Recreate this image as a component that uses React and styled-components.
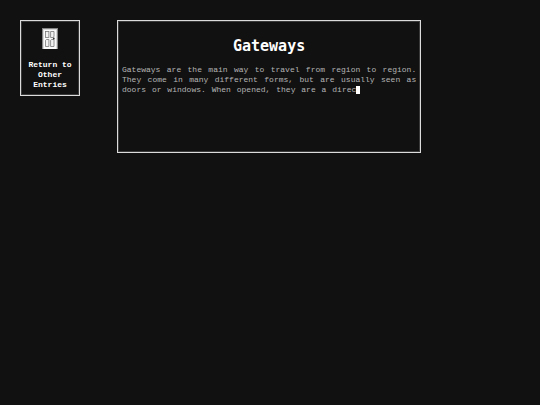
import React from "react";
import styled, { createGlobalStyle } from "styled-components";

const GlobalStyle = createGlobalStyle`
  * { box-sizing: border-box; }
  body {
    margin: 0;
    background: #111;
    color: #fff;
    font-family: "Liberation Mono", "Courier New", monospace;
    font-size: 8px;
    line-height: 10px;
  }
`;

const Page = styled.div`
  display: grid;
  grid-template-columns: 60px minmax(0, 1fr);
  align-items: start;
  column-gap: 37px;
  padding: 20px 22% 20px 20px;
`;

const Frame = styled.div`
  border: 1px solid #dcdcdc;
  box-shadow: inset 0 0 0 1px #3a3a3a;
`;

const ReturnLink = styled(Frame).attrs({ as: "a" })`
  display: flex;
  flex-direction: column;
  align-items: center;
  gap: 11px;
  padding: 7px 4px 5px;
  color: #fff;
  font-weight: bold;
  text-align: center;
  text-decoration: none;
`;

const DoorIcon = styled.svg`
  display: block;
  width: 16px;
  height: 21px;
`;

const Entry = styled(Frame).attrs({ as: "main" })`
  min-height: 133px;
  padding: 16px 4px;
`;

const Title = styled.h1`
  margin: 0 0 10px;
  font: bold 15px/18px "DejaVu Sans Mono", monospace;
  text-align: center;
`;

const Text = styled.p`
  margin: 0;
  color: #b4b4b4;
`;

const Line = styled.span`
  display: block;
  width: ${({ $width }) => $width};
  white-space: nowrap;
  text-align: justify;
  text-align-last: justify;
`;

const Cursor = styled.span`
  display: inline-block;
  width: 4px;
  height: 8px;
  background: #fff;
  vertical-align: -2px;
`;

function Door() {
  return (
    <DoorIcon viewBox="0 0 16 21" aria-hidden="true">
      <rect width="16" height="21" fill="#858585" />
      <rect x="1" y="1" width="14" height="20" fill="#d8d8d8" />
      <rect x="2" y="2" width="12" height="19" fill="#fafafa" />
      <g fill="#f2f2f2" stroke="#777" strokeWidth="0.8">
        <rect x="3.5" y="3.5" width="3.4" height="6" />
        <path d="M8.6 3.5h3.4v5.2l-1 .8H8.6z" />
        <path d="M3.5 12.3l1-.8h2.4v7H3.5zM8.6 18.5v-6.2l1-.8H12v7z" />
      </g>
      <circle cx="11.8" cy="10.5" r="0.9" fill="#333" />
    </DoorIcon>
  );
}

export default function App() {
  return (
    <>
      <GlobalStyle />
      <Page>
        <ReturnLink href="#entries">
          <Door />
          <span>Return to Other Entries</span>
        </ReturnLink>
        <Entry>
          <Title>Gateways</Title>
          <Text>
            <Line $width="100%">Gateways are the main way to travel from region to region.</Line>
            <Line $width="100%">They come in many different forms, but are usually seen as</Line>
            <Line $width="81%">
              doors or windows. When opened, they are a direc<Cursor />
            </Line>
          </Text>
        </Entry>
      </Page>
    </>
  );
}
